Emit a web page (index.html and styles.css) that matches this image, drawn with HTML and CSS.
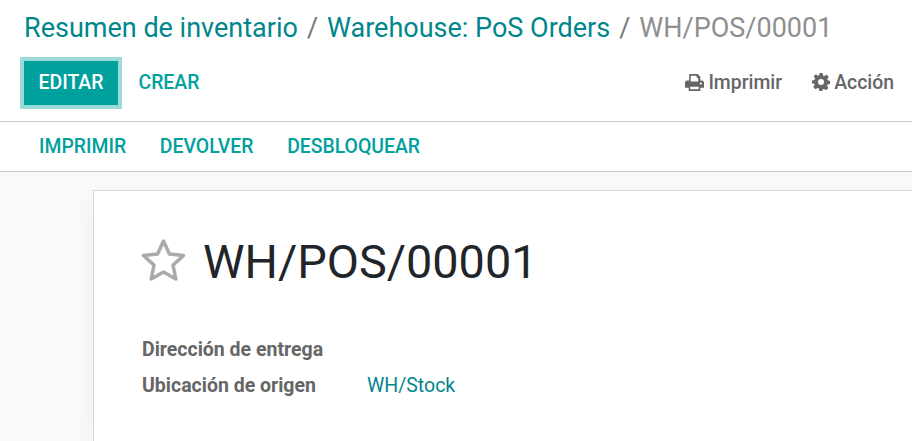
FILE: index.html
```html
<!DOCTYPE html>
<html lang="es">
<head>
  <meta charset="UTF-8">
  <meta name="viewport" content="width=device-width, initial-scale=1.0">
  <title>WH/POS/00001</title>
  <link rel="stylesheet" href="styles.css">
</head>
<body>
  <header class="control-panel">
    <ol class="breadcrumb">
      <li><a href="#">Resumen de inventario</a></li>
      <li class="sep">/</li>
      <li><a href="#">Warehouse: PoS Orders</a></li>
      <li class="sep">/</li>
      <li class="active">WH/POS/00001</li>
    </ol>
    <div class="actions">
      <div class="buttons">
        <button class="btn primary">EDITAR</button>
        <button class="btn link">CREAR</button>
      </div>
      <div class="menus">
        <span class="menu">
          <svg class="icon" viewBox="0 0 18 16" width="19" height="17"><path fill="#666" fill-rule="evenodd" d="M4 0h8l2.5 2.5V6H16a2 2 0 0 1 2 2v5h-3.5v3h-11v-3H0V8a2 2 0 0 1 2-2h2zm1.500 1.500V7h7V3.500H11V1.500zM5 12v2.500h8V12zm10-4a1 1 0 1 0 0 2 1 1 0 0 0 0-2z"/></svg>
          Imprimir
        </span>
        <span class="menu">
          <svg class="icon" viewBox="0 0 18 18" width="18" height="18"><path fill="#666" fill-rule="evenodd" d="M7.400 0h3.200l.4 2.500 1.500.6 2-1.500 2.300 2.300-1.500 2 .7 1.600 2 .3v3.300l-2.400.4-.6 1.500 1.400 2-2.300 2.300-2-1.400-1.500.6-.4 2.500H7.400L7 15.500l-1.500-.6-2 1.400-2.300-2.300 1.500-2-.7-1.500L0 10.600V7.400l2.500-.4.6-1.500-1.500-2 2.300-2.300 2 1.500 1.500-.7zM9 6a3 3 0 1 0 0 6 3 3 0 0 0 0-6z"/></svg>
          Acción
        </span>
      </div>
    </div>
  </header>
  <nav class="statusbar">
    <button class="btn link">IMPRIMIR</button>
    <button class="btn link">DEVOLVER</button>
    <button class="btn link">DESBLOQUEAR</button>
  </nav>
  <main class="content">
    <section class="sheet">
      <div class="title-row">
        <svg class="star" viewBox="0 0 45 42" width="45" height="42"><path fill="none" stroke="#aaa" stroke-width="3.5" stroke-linejoin="round" d="M22.500 2l5.900 12.900 14.100 1.600L32 26.100 34.800 40l-12.300-7-12.300 7L13 26.100 2.500 16.500l14.100-1.600z"/></svg>
        <h1>WH/POS/00001</h1>
      </div>
      <div class="fields">
        <div class="label">Dirección de entrega</div>
        <div></div>
        <div class="label">Ubicación de origen</div>
        <a class="value" href="#">WH/Stock</a>
      </div>
    </section>
  </main>
</body>
</html>
```

FILE: styles.css
```css
body {
  margin: 0;
  height: 441px;
  overflow: hidden;
  display: flex;
  flex-direction: column;
  background-color: #fff;
  font-family: Roboto, "Liberation Sans", sans-serif;
  color: #666;
}

a {
  color: #00868b;
  text-decoration: none;
}

.control-panel {
  flex: none;
  height: 122px;
  box-sizing: border-box;
  padding: 12px 18px 0 24px;
  border-bottom: 1px solid #ccc;
}

.breadcrumb {
  display: flex;
  gap: 9px;
  margin: 0;
  padding: 0;
  list-style: none;
  font-size: 27px;
  line-height: 33px;
}

.breadcrumb a {
  color: #00868b;
}

.breadcrumb .sep {
  color: #777;
}

.breadcrumb .active {
  color: #8f8f8f;
}

.actions {
  display: flex;
  justify-content: space-between;
  align-items: center;
  margin-top: 16px;
}

.buttons {
  display: flex;
}

.btn {
  border: none;
  background: none;
  font-family: inherit;
  font-size: 19.4px;
  font-weight: 500;
  padding: 0 15px 2px;
  height: 44px;
  cursor: pointer;
}

.btn.primary {
  width: 94px;
  padding: 0 0 2px;
  background-color: #00a09d;
  color: #fff;
  box-shadow: 0 0 0 4px #9adbd8;
}

.btn.link {
  color: #00a09d;
  margin-left: 5.5px;
}

.menus {
  display: flex;
  gap: 30px;
  margin-bottom: 2px;
  font-size: 19.4px;
  font-weight: 500;
}

.menu {
  display: flex;
  align-items: center;
  gap: 4px;
}

.statusbar {
  flex: none;
  height: 50px;
  box-sizing: border-box;
  display: flex;
  align-items: center;
  padding-left: 24px;
  gap: 3.6px;
  border-bottom: 1px solid #ccc;
}

.statusbar .btn {
  margin-left: 0;
  padding-bottom: 0;
}

.content {
  flex: 1;
  min-height: 0;
  display: flex;
  background-color: #f9f9f9;
  padding: 18px 0 0 93px;
}

.sheet {
  flex: 1;
  box-sizing: border-box;
  padding: 36px 48px 0;
  background-color: #fff;
  border: 1px solid #d3d6dc;
  border-right: none;
  border-bottom: none;
  box-shadow: 0 5px 20px rgba(0, 0, 0, 0.045);
}

.title-row {
  display: flex;
  align-items: center;
  gap: 17px;
}

.star {
  flex: none;
  margin: -4px 0 0 -1px;
}

h1 {
  margin: 0;
  font-size: 46.8px;
  font-weight: 400;
  line-height: 70px;
  color: #212529;
}

.fields {
  display: grid;
  grid-template-columns: 225px 1fr;
  grid-auto-rows: 36px;
  align-items: center;
  margin-top: 34px;
  font-size: 19.5px;
}

.label {
  font-weight: 700;
  color: #666;
}
```
